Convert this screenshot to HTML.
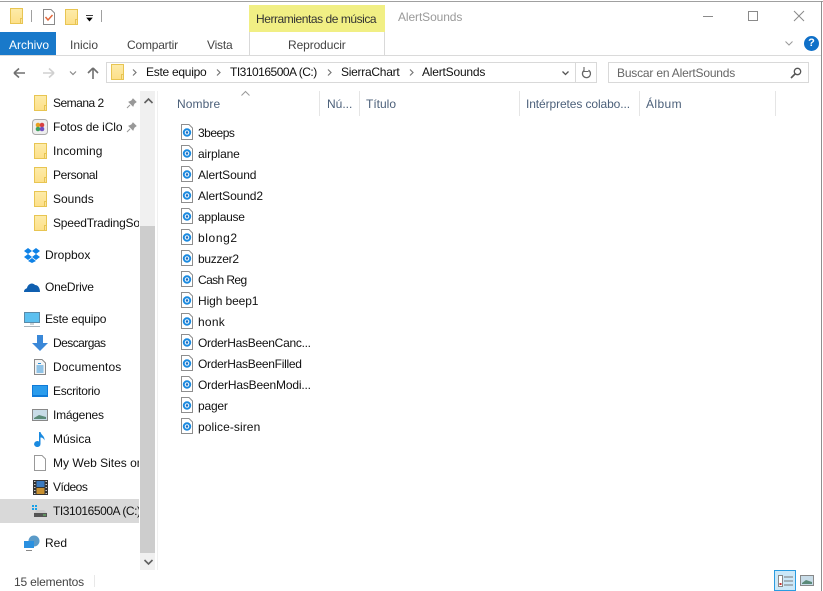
<!DOCTYPE html>
<html><head><meta charset="utf-8"><style>
html,body{margin:0;padding:0;background:#fff}
#w{position:relative;width:823px;height:591px;overflow:hidden;background:#fff;font:12px "Liberation Sans",sans-serif;color:#111}
.t{position:absolute;white-space:nowrap;line-height:16px}
.b{position:absolute}
.f{position:absolute;width:11px;height:14px;border:1px solid #e8c552;background:linear-gradient(#fdeba8,#fde08a)}
.f:after{content:"";position:absolute;right:-1px;bottom:-1px;width:3px;height:6px;border:1px solid #e8c552;background:#fbe39a;box-sizing:border-box}
svg{position:absolute;overflow:visible}
.h{color:#4c607a}
.g{color:#444}
</style></head><body><div id="w">
<div class="b" style="left:0;top:1px;width:823px;height:1px;background:#a0a0a0"></div>
<div class="b" style="left:821px;top:1px;width:1px;height:590px;background:#8f8f8f"></div>

<div class="f" style="left:10px;top:8px"></div>
<div class="b" style="left:31px;top:10px;width:1px;height:12px;background:#a0a0a0"></div>
<svg style="left:43px;top:9px" width="12" height="16"><path d="M.5.5H8L11.500 4V15.500H.5Z" fill="#fff" stroke="#8a8a8a"/><path d="M2.500 8l2.500 3L9.500 6" fill="none" stroke="#e2683c" stroke-width="1.500"/></svg>
<div class="f" style="left:65px;top:9px"></div>
<svg style="left:86px;top:15px" width="8" height="7"><path d="M0 .5H7M1 3H6L3.500 6Z" fill="#000" stroke="#000" stroke-width=".7"/></svg>
<div class="b" style="left:101px;top:10px;width:1px;height:12px;background:#a0a0a0"></div>

<div class="b" style="left:249px;top:5px;width:136px;height:27px;background:#f1ef84"></div>
<div class="t" style="left:256px;top:11px;color:#333;letter-spacing:-.45px">Herramientas de música</div>
<div class="t" style="left:398px;top:9px;color:#9a9a9a;letter-spacing:-.1px">AlertSounds</div>
<svg style="left:703px;top:10px" width="110" height="14"><path d="M0 6.500H10" stroke="#8a8a8a" fill="none"/><path d="M45.500 1.500H54.500V10.500H45.500Z" stroke="#8a8a8a" fill="none"/><path d="M91 1L101 11M101 1L91 11" stroke="#8a8a8a" fill="none"/></svg>

<div class="b" style="left:0;top:32px;width:56px;height:23px;background:#1979ca"></div>
<div class="t" style="left:9px;top:37px;color:#fff">Archivo</div>
<div class="t g" style="left:70px;top:37px">Inicio</div>
<div class="t g" style="left:127px;top:37px;letter-spacing:-.2px">Compartir</div>
<div class="t g" style="left:207px;top:37px;letter-spacing:-.2px">Vista</div>
<div class="b" style="left:249px;top:32px;width:134px;height:23px;border:1px solid #d9d9d9;border-bottom:0;border-top:0;background:#fff"></div>
<div class="t g" style="left:288px;top:37px;letter-spacing:-.1px">Reproducir</div>
<div class="b" style="left:0;top:55px;width:821px;height:1px;background:#dadada"></div>
<svg style="left:785px;top:41px" width="8" height="5"><path d="M.5.500L4 4L7.500 .5" fill="none" stroke="#9a9a9a"/></svg>
<div class="b" style="left:804px;top:36px;width:15px;height:15px;border-radius:50%;background:#1070c8;color:#fff;font:bold 11px/15px 'Liberation Sans',sans-serif;text-align:center">?</div>

<svg style="left:13px;top:66px" width="88" height="14"><path d="M1 7H12M1 7L6 2.500M1 7L6 11.500" fill="none" stroke="#707070" stroke-width="1.600"/><path d="M30 7H41M41 7L36 2.500M41 7L36 11.500" fill="none" stroke="#d0d0d0" stroke-width="1.600"/><path d="M57 5.500L60 8.500L63 5.500" fill="none" stroke="#8a8a8a" stroke-width="1.200"/><path d="M80 13V2M80 2L75 7M80 2L85 7" fill="none" stroke="#707070" stroke-width="1.600"/></svg>
<div class="b" style="left:106px;top:62px;width:489px;height:19px;border:1px solid #d9d9d9"></div>
<div class="b" style="left:575px;top:63px;width:1px;height:19px;background:#d9d9d9"></div>
<div class="f" style="left:111px;top:64px"></div>
<div class="t" style="left:146px;top:64px;letter-spacing:-.27px">Este equipo</div>
<div class="t" style="left:230px;top:64px;letter-spacing:-.5px">TI31016500A (C:)</div>
<div class="t" style="left:341px;top:64px;letter-spacing:-.27px">SierraChart</div>
<div class="t" style="left:422px;top:64px;letter-spacing:-.2px">AlertSounds</div>
<svg style="left:132px;top:68px" width="290" height="9"><g fill="none" stroke="#777" stroke-width="1.200"><path d="M1 1.500L4 4.500L1 7.500"/><path d="M85 1.500L88 4.500L85 7.500"/><path d="M196 1.500L199 4.500L196 7.500"/><path d="M278 1.500L281 4.500L278 7.500"/></g></svg>
<svg style="left:562px;top:71px" width="7" height="5"><path d="M.5.500L3.500 3.500L6.500 .5" fill="none" stroke="#555" stroke-width="1.300"/></svg>
<svg style="left:581px;top:66px" width="11" height="13"><path d="M7.500 4.200A4 4 0 1 1 3 4.500" fill="none" stroke="#666" stroke-width="1.300"/><path d="M3 1V5.500H7.500" fill="none" stroke="#666" stroke-width="1.100"/></svg>
<div class="b" style="left:608px;top:62px;width:199px;height:19px;border:1px solid #d9d9d9"></div>
<div class="t" style="left:617px;top:65px;color:#666;letter-spacing:-.19px">Buscar en AlertSounds</div>
<svg style="left:790px;top:67px" width="12" height="12"><circle cx="7.500" cy="4.500" r="3.200" fill="none" stroke="#555" stroke-width="1.300"/><path d="M5 7L1 11" stroke="#555" stroke-width="1.600"/></svg>

<div class="b" style="left:140px;top:91px;width:15px;height:479px;background:#f0f0f0"></div>
<div class="b" style="left:140px;top:226px;width:15px;height:327px;background:#cdcdcd"></div>
<div class="b" style="left:157px;top:91px;width:1px;height:479px;background:#f0f0f0"></div>
<svg style="left:144px;top:98px" width="9" height="6"><path d="M.5 5L4.500 1L8.500 5" fill="none" stroke="#606060" stroke-width="1.600"/></svg>
<svg style="left:144px;top:559px" width="9" height="6"><path d="M.5 1L4.500 5L8.500 1" fill="none" stroke="#606060" stroke-width="1.600"/></svg>
<div class="b" style="left:0;top:499px;width:139px;height:24px;background:#d9d9d9"></div>

<div class="f" style="left:34px;top:95px"></div>
<div class="t" style="left:53px;top:95px;letter-spacing:-.5px">Semana 2</div>
<svg style="left:126px;top:98px" width="11" height="11"><path d="M1 10L4 7M3 4L7 8L8 5.500L10 4L7 1L5.500 3Z" fill="#999" stroke="#999"/></svg>
<svg style="left:32px;top:119px" width="16" height="16"><rect x=".5" y=".5" width="15" height="15" rx="3" fill="#eee" stroke="#aaa"/><circle cx="6" cy="6" r="2.300" fill="#e8a020"/><circle cx="10" cy="6" r="2.300" fill="#d84040"/><circle cx="6" cy="10" r="2.300" fill="#40a060"/><circle cx="10" cy="10" r="2.300" fill="#7050c0"/></svg>
<div class="t" style="left:53px;top:119px;width:69px;overflow:hidden;letter-spacing:-.1px">Fotos de iCloud</div>
<svg style="left:126px;top:122px" width="11" height="11"><path d="M1 10L4 7M3 4L7 8L8 5.500L10 4L7 1L5.500 3Z" fill="#999" stroke="#999"/></svg>
<div class="f" style="left:34px;top:143px"></div>
<div class="t" style="left:53px;top:143px;letter-spacing:.1px">Incoming</div>
<div class="f" style="left:34px;top:167px"></div>
<div class="t" style="left:53px;top:167px;letter-spacing:-.35px">Personal</div>
<div class="f" style="left:34px;top:191px"></div>
<div class="t" style="left:53px;top:191px">Sounds</div>
<div class="f" style="left:34px;top:215px"></div>
<div class="t" style="left:53px;top:215px;width:86px;overflow:hidden;letter-spacing:-.2px">SpeedTradingSoftware</div>

<svg style="left:24px;top:248px" width="16" height="15" fill="#0f82e6"><path d="M0 3L4 0L8 3L4 6ZM8 3L12 0L16 3L12 6ZM0 9L4 6L8 9L4 12ZM8 9L12 6L16 9L12 12ZM4 13L8 10L12 13L8 15Z"/></svg>
<div class="t" style="left:45px;top:247px">Dropbox</div>
<svg style="left:24px;top:282px" width="16" height="10"><path d="M0 10C0 7 2 7 3 6C4 2 8 0 11 3C14 3 16 6 16 10Z" fill="#0f5fb0"/></svg>
<div class="t" style="left:45px;top:279px;letter-spacing:-.25px">OneDrive</div>
<svg style="left:24px;top:312px" width="16" height="15"><rect x=".5" y=".5" width="15" height="10" fill="#5cc0f0" stroke="#5a8aa8"/><path d="M6 12H10" stroke="#9aa8b0"/><path d="M0 14.500H16" stroke="#a8b4bc"/></svg>
<div class="t" style="left:45px;top:311px;letter-spacing:-.2px">Este equipo</div>
<svg style="left:32px;top:335px" width="16" height="16"><path d="M5 0H11V8H16L8 16L0 8H5Z" fill="#3a88d8"/></svg>
<div class="t" style="left:53px;top:335px;letter-spacing:-.55px">Descargas</div>
<svg style="left:34px;top:359px" width="12" height="16"><path d="M.5.500H8L11.500 4V15.500H.5Z" fill="#f4f4f4" stroke="#888"/><path d="M4 4.500H7M2.500 7H9.500M2.500 9H9.500M2.500 11H9.500M2.500 13H9.500" stroke="#2a90d8"/></svg>
<div class="t" style="left:53px;top:359px;letter-spacing:.1px">Documentos</div>
<svg style="left:32px;top:385px" width="16" height="12"><rect width="16" height="12" fill="#0f7ad8"/><rect x="1" y="1" width="14" height="9" fill="#2a9cec"/></svg>
<div class="t" style="left:53px;top:383px;letter-spacing:-.3px">Escritorio</div>
<svg style="left:32px;top:409px" width="16" height="12"><rect x=".5" y=".5" width="15" height="11" fill="#c8dce8" stroke="#888"/><path d="M2 9L7 6L14 8V10H2Z" fill="#5a8a78"/></svg>
<div class="t" style="left:53px;top:407px;letter-spacing:-.25px">Imágenes</div>
<svg style="left:34px;top:432px" width="12" height="15"><path d="M5 0H6.500C7 3 11 4 10.500 8.500C9.500 6 8 5.500 6.500 5.500V12A3.200 3 0 1 1 5 9.500Z" fill="#1a8ae0"/></svg>
<div class="t" style="left:53px;top:431px">Música</div>
<svg style="left:34px;top:455px" width="12" height="16"><path d="M.5.500H8L11.500 4V15.500H.5Z" fill="#fff" stroke="#999"/></svg>
<div class="t" style="left:53px;top:455px;width:86px;overflow:hidden">My Web Sites on MSN</div>
<svg style="left:33px;top:480px" width="15" height="15"><rect width="15" height="15" fill="#333"/><path d="M1 1.500H2.500M1 4.500H2.500M1 7.500H2.500M1 10.500H2.500M1 13.500H2.500M12.500 1.500H14M12.500 4.500H14M12.500 7.500H14M12.500 10.500H14M12.500 13.500H14" stroke="#ccc"/><rect x="3.500" y="1" width="8" height="6" fill="#3a7ac0"/><rect x="3.500" y="8" width="8" height="6" fill="#c89030"/></svg>
<div class="t" style="left:53px;top:479px;letter-spacing:-.5px">Vídeos</div>
<svg style="left:32px;top:505px" width="16" height="13"><path d="M0 0H2V2H0ZM3 0H5V2H3ZM0 3H2V5H0ZM3 3H5V5H3Z" fill="#18a0e8"/><path d="M2 8H15V12H2Z" fill="#555"/><path d="M5 5H12L15 8H2Z" fill="#ccc"/><path d="M11 10H14" stroke="#6c6"/></svg>
<div class="t" style="left:53px;top:503px;width:86px;overflow:hidden;letter-spacing:-.45px">TI31016500A (C:)</div>
<svg style="left:24px;top:535px" width="16" height="16"><circle cx="10" cy="6" r="5.500" fill="#5a9ac8"/><rect x="0" y="6" width="10" height="7" fill="#2a90e0"/><path d="M2 15.500H8" stroke="#888"/></svg>
<div class="t" style="left:45px;top:535px">Red</div>

<div class="t h" style="left:177px;top:96px;letter-spacing:.1px">Nombre</div>
<svg style="left:241px;top:91px" width="9" height="5"><path d="M.5 4.500L4.500 .5L8.500 4.500" fill="none" stroke="#999"/></svg>
<div class="b" style="left:319px;top:91px;width:1px;height:25px;background:#e5e5e5"></div>
<div class="t h" style="left:327px;top:96px">Nú...</div>
<div class="b" style="left:359px;top:91px;width:1px;height:25px;background:#e5e5e5"></div>
<div class="t h" style="left:366px;top:96px">Título</div>
<div class="b" style="left:519px;top:91px;width:1px;height:25px;background:#e5e5e5"></div>
<div class="t h" style="left:526px;top:96px;letter-spacing:-.1px">Intérpretes colabo...</div>
<div class="b" style="left:639px;top:91px;width:1px;height:25px;background:#e5e5e5"></div>
<div class="t h" style="left:646px;top:96px;letter-spacing:.4px">Álbum</div>
<div class="b" style="left:775px;top:91px;width:1px;height:25px;background:#e5e5e5"></div>

<svg width="0" height="0"><defs><g id="a"><path d="M.5.500H8L11.500 4V15.500H.5Z" fill="#fff" stroke="#8e8e8e"/><circle cx="6" cy="8.500" r="4.200" fill="#1a8ae0"/><circle cx="6" cy="8.500" r="2.300" fill="#e8f4fc"/><circle cx="6" cy="8.500" r="1.200" fill="#1a6ac0"/></g></defs></svg>
<svg style="left:181px;top:124px" width="12" height="16"><use href="#a"/></svg><div class="t" style="left:198px;top:125px;letter-spacing:-.5px">3beeps</div>
<svg style="left:181px;top:145px" width="12" height="16"><use href="#a"/></svg><div class="t" style="left:198px;top:146px;letter-spacing:-.12px">airplane</div>
<svg style="left:181px;top:166px" width="12" height="16"><use href="#a"/></svg><div class="t" style="left:198px;top:167px;letter-spacing:-.1px">AlertSound</div>
<svg style="left:181px;top:187px" width="12" height="16"><use href="#a"/></svg><div class="t" style="left:198px;top:188px;letter-spacing:-.1px">AlertSound2</div>
<svg style="left:181px;top:208px" width="12" height="16"><use href="#a"/></svg><div class="t" style="left:198px;top:209px;letter-spacing:-.25px">applause</div>
<svg style="left:181px;top:229px" width="12" height="16"><use href="#a"/></svg><div class="t" style="left:198px;top:230px;letter-spacing:.6px">blong2</div>
<svg style="left:181px;top:250px" width="12" height="16"><use href="#a"/></svg><div class="t" style="left:198px;top:251px;letter-spacing:-.28px">buzzer2</div>
<svg style="left:181px;top:271px" width="12" height="16"><use href="#a"/></svg><div class="t" style="left:198px;top:272px;letter-spacing:-.6px">Cash Reg</div>
<svg style="left:181px;top:292px" width="12" height="16"><use href="#a"/></svg><div class="t" style="left:198px;top:293px;letter-spacing:-.1px">High beep1</div>
<svg style="left:181px;top:313px" width="12" height="16"><use href="#a"/></svg><div class="t" style="left:198px;top:314px;letter-spacing:.25px">honk</div>
<svg style="left:181px;top:334px" width="12" height="16"><use href="#a"/></svg><div class="t" style="left:198px;top:335px;letter-spacing:-.28px">OrderHasBeenCanc...</div>
<svg style="left:181px;top:355px" width="12" height="16"><use href="#a"/></svg><div class="t" style="left:198px;top:356px;letter-spacing:-.28px">OrderHasBeenFilled</div>
<svg style="left:181px;top:376px" width="12" height="16"><use href="#a"/></svg><div class="t" style="left:198px;top:377px;letter-spacing:-.17px">OrderHasBeenModi...</div>
<svg style="left:181px;top:397px" width="12" height="16"><use href="#a"/></svg><div class="t" style="left:198px;top:398px;letter-spacing:-.2px">pager</div>
<svg style="left:181px;top:418px" width="12" height="16"><use href="#a"/></svg><div class="t" style="left:198px;top:419px;letter-spacing:.08px">police-siren</div>

<div class="t g" style="left:14px;top:574px;letter-spacing:-.17px">15 elementos</div>
<div class="b" style="left:94px;top:575px;width:1px;height:12px;background:#e8e8e8"></div>
<div class="b" style="left:774px;top:570px;width:22px;height:21px;box-sizing:border-box;border:1px solid #2a9ce0;background:#cce8f8"></div>
<svg style="left:778px;top:575px" width="15" height="13"><rect x=".5" y=".5" width="4" height="11" fill="#fff" stroke="#888"/><path d="M6 2H15M6 6H15M6 10H15" stroke="#777"/><rect x="1.500" y="8" width="2" height="2" fill="#c83030"/></svg>
<svg style="left:800px;top:575px" width="14" height="11"><rect x=".5" y=".5" width="13" height="10" fill="#c8dce8" stroke="#888"/><path d="M2 8L6 5L12 7V9H2Z" fill="#5a8a78"/></svg>
</div></body></html>
